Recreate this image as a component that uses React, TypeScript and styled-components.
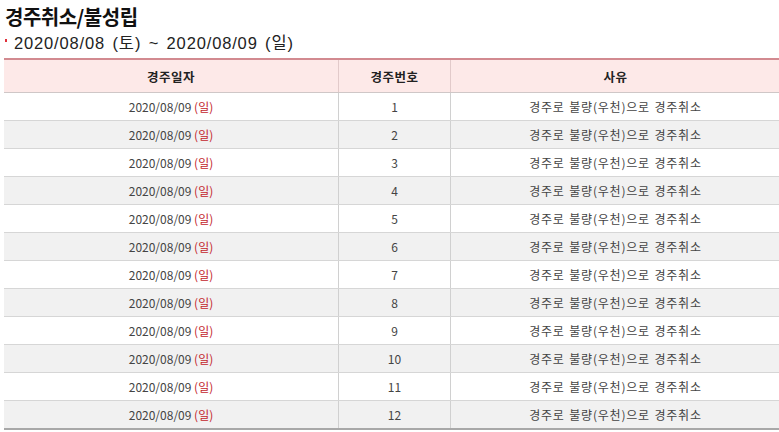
import React from "react";
import styled, { createGlobalStyle } from "styled-components";

const GlobalStyle = createGlobalStyle`
  body {
    margin: 0;
    background: #fff;
    font-family: "Noto Sans CJK KR", "Liberation Sans", sans-serif;
    color: #333;
  }
`;

const Page = styled.div`
  width: 779px;
  height: 432px;
  overflow: hidden;
  padding: 0 0 0 4px;
  box-sizing: border-box;
`;

const Title = styled.h1`
  margin: 0;
  padding: 3px 0 0 1px;
  font-size: 20px;
  line-height: 27px;
  font-weight: 700;
  color: #111;
  letter-spacing: -0.5px;
`;

const Period = styled.div`
  display: flex;
  align-items: center;
  gap: 7px;
  height: 24px;
  font-size: 16.5px;
  letter-spacing: 0.85px;
  word-spacing: 2px;
  color: #222;
  font-family: "Liberation Sans", "Noto Sans CJK KR", sans-serif;
  &::before {
    content: "";
    flex: none;
    width: 2px;
    height: 3px;
    background: #e0303a;
    margin: -4px 0 0 1px;
  }
`;

const Table = styled.table`
  margin-top: 4px;
  width: 776px;
  border-collapse: collapse;
  table-layout: fixed;
  font-size: 12px;
  border-top: 2px solid #d28a90;
  border-bottom: 2px solid #a8a8a8;
`;

const Th = styled.th<{ $w?: number }>`
  width: ${(p) => (p.$w ? `${p.$w}px` : "auto")};
  height: 32px;
  padding: 0;
  background: #fde9e8;
  font-size: 12.5px;
  font-weight: 700;
  color: #222;
  letter-spacing: 0.5px;
  border-bottom: 1px solid #cfc7c7;
  border-left: 1px solid #e2caca;
  &:first-child {
    border-left: none;
  }
`;

const Row = styled.tr<{ $alt: boolean }>`
  background: ${(p) => (p.$alt ? "#f1f1f1" : "#fff")};
`;

const Td = styled.td<{ $wide?: boolean }>`
  height: 27px;
  padding: 0;
  text-align: center;
  color: #444;
  letter-spacing: ${(p) => (p.$wide ? "0.8px" : "0")};
  word-spacing: ${(p) => (p.$wide ? "1px" : "0")};
  border-bottom: 1px solid #d6d6d6;
  border-left: 1px solid #d0d0d0;
  &:first-child {
    border-left: none;
  }
`;

const Day = styled.span`
  color: #c3252c;
`;

const rows = Array.from({ length: 12 }, (_, i) => i + 1);

const App: React.FC = () => {
  return (
    <Page>
      <GlobalStyle />
      <Title>경주취소/불성립</Title>
      <Period>2020/08/08 (토) ~ 2020/08/09 (일)</Period>
      <Table>
        <thead>
          <tr>
            <Th $w={334}>경주일자</Th>
            <Th $w={111}>경주번호</Th>
            <Th>사유</Th>
          </tr>
        </thead>
        <tbody>
          {rows.map((n) => (
            <Row key={n} $alt={n % 2 === 0}>
              <Td>
                2020/08/09 <Day>(일)</Day>
              </Td>
              <Td>{n}</Td>
              <Td $wide>경주로 불량(우천)으로 경주취소</Td>
            </Row>
          ))}
        </tbody>
      </Table>
    </Page>
  );
};

export default App;
